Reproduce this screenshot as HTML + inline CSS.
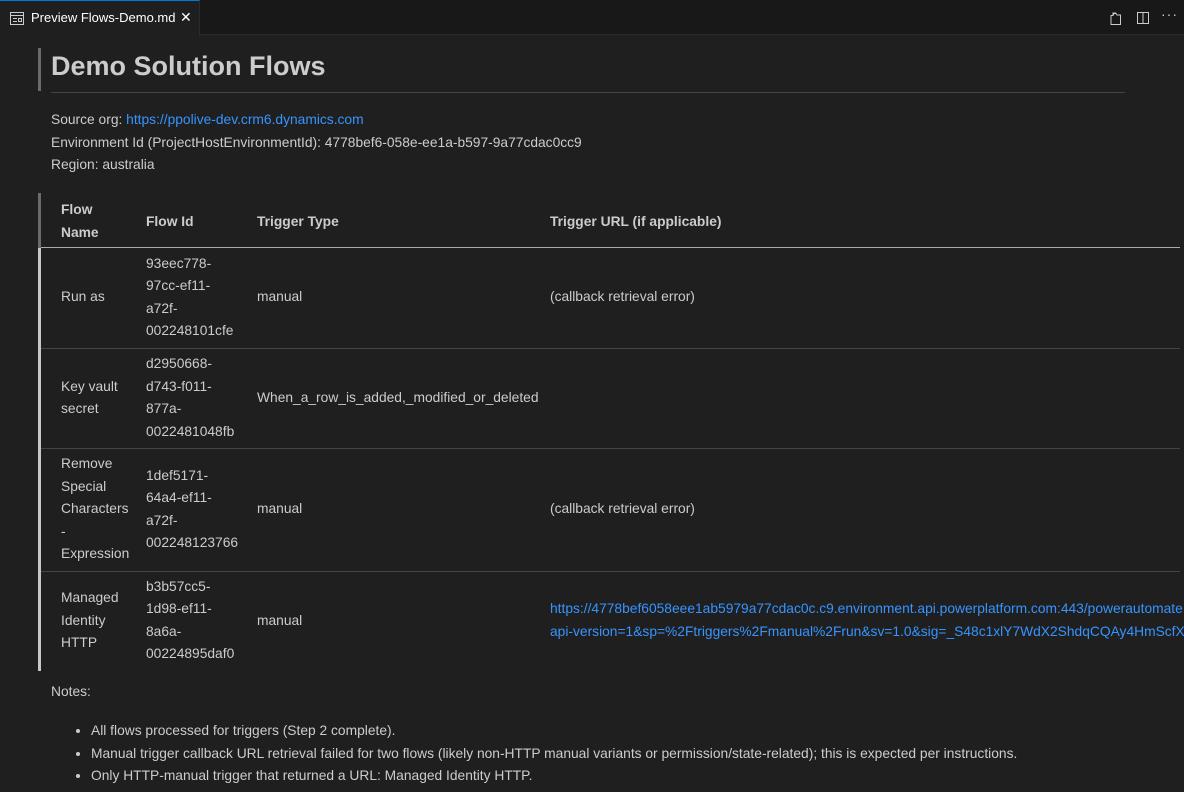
<!DOCTYPE html>
<html><head><meta charset="utf-8"><style>
*{margin:0;padding:0;box-sizing:border-box}
body{width:1184px;height:792px;overflow:hidden;background:#1f1f1f;color:#cccccc;font-family:"Liberation Sans",sans-serif;font-size:13.8px;position:relative}
.tabbar{position:absolute;left:0;top:0;width:1184px;height:35px;background:#181818;border-bottom:1px solid #2b2b2b}
.tab{position:absolute;left:0;top:0;width:200px;height:36px;background:#1f1f1f;border-top:1px solid #0078d4;border-right:1px solid #2b2b2b;color:#fff;font-size:13px;line-height:34px;padding-left:31px}
.tab .x{position:absolute;left:180px;top:0;font-size:14px;font-family:"DejaVu Sans",sans-serif}
.bar{position:absolute;left:38px;width:3px}
h1{position:absolute;left:51px;top:51px;font-size:27px;font-weight:bold;color:#cccccc}
.hr{position:absolute;left:51px;top:92px;width:1074px;height:1px;background:#454545}
.p{position:absolute;left:51px;line-height:22.5px;white-space:nowrap}
a{color:#3794ff;text-decoration:none}
table{position:absolute;left:41px;top:197px;width:1139px;table-layout:fixed;border-collapse:collapse;white-space:nowrap;line-height:22.5px}
td,th{padding:0 0 0 10px;text-align:left;vertical-align:middle;overflow:visible}
td:first-child,th:first-child{padding-left:20px}
th{font-weight:bold;height:50px;border-bottom:1px solid #aaaaaa}
td{border-bottom:1px solid #444}
ul{position:absolute;left:91px;top:720px;line-height:22.5px;white-space:nowrap}
</style></head><body>
<div class="tabbar"></div>
<div class="tab">
<svg style="position:absolute;left:10px;top:11px" width="14" height="13" viewBox="0 0 14 13"><rect x="0.5" y="0.5" width="13" height="12" fill="none" stroke="#ccc"/><line x1="1" y1="3.5" x2="13" y2="3.5" stroke="#ccc"/><line x1="3" y1="6.5" x2="7" y2="6.5" stroke="#ccc"/><line x1="3" y1="9.5" x2="7" y2="9.5" stroke="#ccc"/><rect x="8.5" y="6.5" width="3" height="3" fill="none" stroke="#ccc"/></svg>
Preview Flows-Demo.md<span class="x">✕</span></div>
<svg style="position:absolute;left:1108px;top:10px" width="16" height="16" viewBox="0 0 16 16"><path d="M3 5.5h2l1-2h2l1 1.5h3.5v9.5h-9.5z" fill="none" stroke="#ccc"/><path d="M5 5.5V3h3" fill="none" stroke="#ccc"/></svg>
<svg style="position:absolute;left:1135px;top:10px" width="16" height="16" viewBox="0 0 16 16"><rect x="2.5" y="2.5" width="11" height="11" fill="none" stroke="#ccc"/><line x1="8" y1="2.5" x2="8" y2="13.5" stroke="#ccc"/></svg>
<div style="position:absolute;left:1161px;top:6px;color:#ccc;font-size:14px;letter-spacing:1px">···</div>
<div class="bar" style="top:48px;height:43px;background:#6b6b6b"></div>
<h1>Demo Solution Flows</h1>
<div class="hr"></div>
<div class="p" style="top:109px">Source org: <a>https://ppolive-dev.crm6.dynamics.com</a></div>
<div class="p" style="top:132px">Environment Id (ProjectHostEnvironmentId): 4778bef6-058e-ee1a-b597-9a77cdac0cc9</div>
<div class="p" style="top:154px">Region: australia</div>
<div class="bar" style="top:193px;height:55px;background:#6b6b6b"></div>
<div class="bar" style="top:248px;height:423px;background:#c8c8c8"></div>
<table>
<colgroup><col style="width:95px"><col style="width:111px"><col style="width:293px"><col style="width:640px"></colgroup>
<tr><th>Flow<br>Name</th><th>Flow Id</th><th>Trigger Type</th><th>Trigger URL (if applicable)</th></tr>
<tr style="height:101px"><td>Run as</td><td>93eec778-<br>97cc-ef11-<br>a72f-<br>002248101cfe</td><td>manual</td><td>(callback retrieval error)</td></tr>
<tr style="height:100px"><td>Key vault<br>secret</td><td>d2950668-<br>d743-f011-<br>877a-<br>0022481048fb</td><td>When_a_row_is_added,_modified_or_deleted</td><td></td></tr>
<tr style="height:123px"><td>Remove<br>Special<br>Characters<br>-<br>Expression</td><td>1def5171-<br>64a4-ef11-<br>a72f-<br>002248123766</td><td>manual</td><td>(callback retrieval error)</td></tr>
<tr style="height:99px"><td style="border:none">Managed<br>Identity<br>HTTP</td><td style="border:none">b3b57cc5-<br>1d98-ef11-<br>8a6a-<br>00224895daf0</td><td style="border:none">manual</td><td style="border:none"><a>https://4778bef6058eee1ab5979a77cdac0c.c9.environment.api.powerplatform.com:443/powerautomate<br>api-version=1&amp;sp=%2Ftriggers%2Fmanual%2Frun&amp;sv=1.0&amp;sig=_S48c1xlY7WdX2ShdqCQAy4HmScfX</a></td></tr>
</table>
<div class="p" style="top:681px">Notes:</div>
<ul>
<li>All flows processed for triggers (Step 2 complete).</li>
<li>Manual trigger callback URL retrieval failed for two flows (likely non-HTTP manual variants or permission/state-related); this is expected per instructions.</li>
<li>Only HTTP-manual trigger that returned a URL: Managed Identity HTTP.</li>
</ul>
</body></html>
